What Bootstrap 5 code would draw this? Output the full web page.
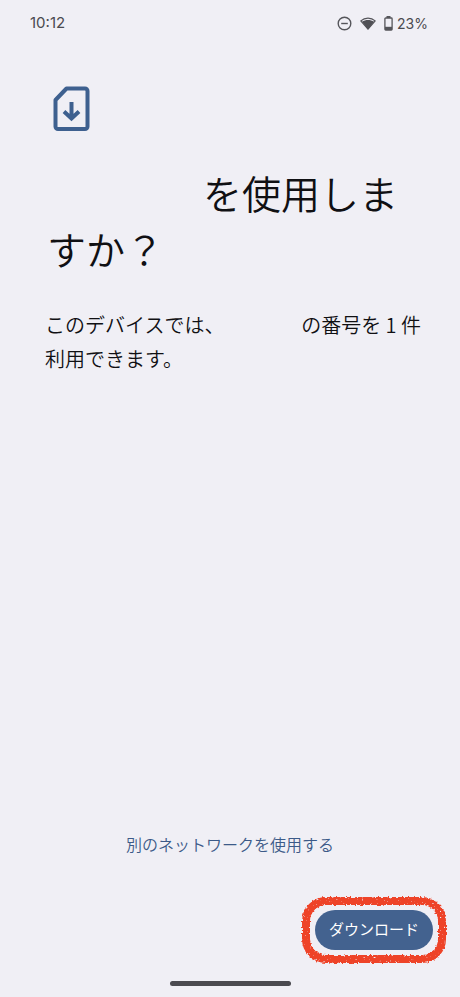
<!DOCTYPE html>
<html lang="ja">
<head>
<meta charset="utf-8">
<meta name="viewport" content="width=device-width, initial-scale=1">
<title>eSIM</title>
<link href="https://cdn.jsdelivr.net/npm/bootstrap@5.3.0/dist/css/bootstrap.min.css" rel="stylesheet">
<style>
  body { background: #f0eff5; color: #101013; font-family: "Noto Sans CJK JP", sans-serif; }
  .status-bar { height: 46px; padding: 0 32px 0 30px; font-family: Inter, sans-serif; font-size: 15px; color: #4a4a4f; }
  .status-bar svg { display: block; }
  .status-icons { font-size: 14px; }
  .screen-main { padding: 40px 36px 0 45px; }
  .sim-icon { display: block; margin-left: 8px; }
  .screen-title { font-size: 39px; line-height: 56px; font-weight: 350; margin: 32px 0 32px 2px; }
  .screen-text { font-size: 20px; line-height: 34px; font-weight: 350; margin: 0 -8px 0 0; }
  .other-link { font-size: 16px; line-height: 24px; font-weight: 350; color: #3c5a88; }
  .actions { padding: 54px 27px 0; }
  .btn-download { background: #43628f; color: #fff; font-size: 15px; line-height: 22px; padding: 8px 14px 10px; border: 0; }
  .btn-download:hover { background: #37547e; color: #fff; }
  .brush-ring { left: -15px; top: -15px; width: calc(100% + 30px); height: calc(100% + 30px); pointer-events: none; overflow: visible; }
  .brush-ring rect { x: 6px; y: 6px; width: calc(100% - 12px); height: calc(100% - 12px); }
  .home-bar { width: 121px; height: 5px; background: #4b4a50; margin: 31px auto 11px; }
</style>
</head>
<body>
<div class="d-flex flex-column min-vh-100">
  <header class="status-bar d-flex align-items-center justify-content-between">
    <span>10:12</span>
    <span class="status-icons d-flex align-items-center">
      <svg class="me-2" width="15" height="15" viewBox="0 0 15 15" fill="none" stroke="#55555a" stroke-width="1.4" aria-hidden="true"><circle cx="7.5" cy="7.5" r="6.3"/><path d="M4.2 7.5h6.6"/></svg>
      <svg class="me-2" width="16" height="13" viewBox="0 0 16 13" aria-hidden="true"><path d="M.8 3.900C5 .1 11 .1 15.200 3.900L8 12.200Z" fill="none" stroke="#55555a" stroke-width="1.2" stroke-linejoin="round"/><path d="M2 4.700C5.600 2.400 10.400 2.400 14 4.700L8 12.400Z" fill="#505055"/></svg>
      <svg class="me-1" width="9" height="15" viewBox="0 0 9 15" aria-hidden="true"><path d="M2.500 0h4v2h-4z" fill="#55555a"/><rect x=".9" y="2" width="7.200" height="12" rx=".8" fill="none" stroke="#55555a" stroke-width="1.300"/><path d="M1 10.800h7V14H1z" fill="#55555a"/></svg>
      <span>23%</span>
    </span>
  </header>
  <main class="screen-main flex-grow-1">
    <svg class="sim-icon" width="37" height="46" viewBox="0 0 37 46" fill="none" stroke="#3e608f" stroke-width="4" aria-hidden="true"><path d="M13.500 2.500H32a2.500 2.500 0 0 1 2.500 2.500V40.500a2.500 2.500 0 0 1-2.500 2.500H5a2.500 2.500 0 0 1-2.500-2.500V14Z" stroke-linejoin="round"/><path d="M18.500 16v16M11 25.500l7.500 7 7.500-7"/></svg>
    <h1 class="screen-title">&#x3000;&#x3000;&#x3000;&#x3000;を使用しますか？</h1>
    <p class="screen-text">このデバイスでは、&#x3000;&#x3000;&#x3000;&nbsp;&nbsp;&nbsp;&nbsp;&nbsp;&nbsp;の番号を 1 件利用できます。</p>
  </main>
  <footer>
    <div class="text-center"><a class="other-link text-decoration-none" href="#">別のネットワークを使用する</a></div>
    <div class="actions d-flex justify-content-end">
      <div class="position-relative d-flex">
        <button type="button" class="btn btn-download rounded-pill">ダウンロード</button>
        <svg class="brush-ring position-absolute" aria-hidden="true">
          <defs><filter id="chalk" x="-10%" y="-20%" width="120%" height="140%" color-interpolation-filters="sRGB">
            <feTurbulence type="fractalNoise" baseFrequency="0.5" numOctaves="2" seed="4" result="n"/>
            <feDisplacementMap in="SourceGraphic" in2="n" scale="4" xChannelSelector="R" yChannelSelector="G" result="edge"/>
            <feColorMatrix in="n" type="matrix" values="0 0 0 0 0  0 0 0 0 0  0 0 0 0 0  0 0 9 0 -1.8" result="grain"/>
            <feComposite in="edge" in2="grain" operator="in"/>
          </filter></defs>
          <rect rx="20" fill="none" stroke="#ee4328" stroke-width="8" filter="url(#chalk)"/>
        </svg>
      </div>
    </div>
    <div class="home-bar rounded-pill"></div>
  </footer>
</div>
<script src="https://cdn.jsdelivr.net/npm/bootstrap@5.3.0/dist/js/bootstrap.bundle.min.js"></script>
</body>
</html>
